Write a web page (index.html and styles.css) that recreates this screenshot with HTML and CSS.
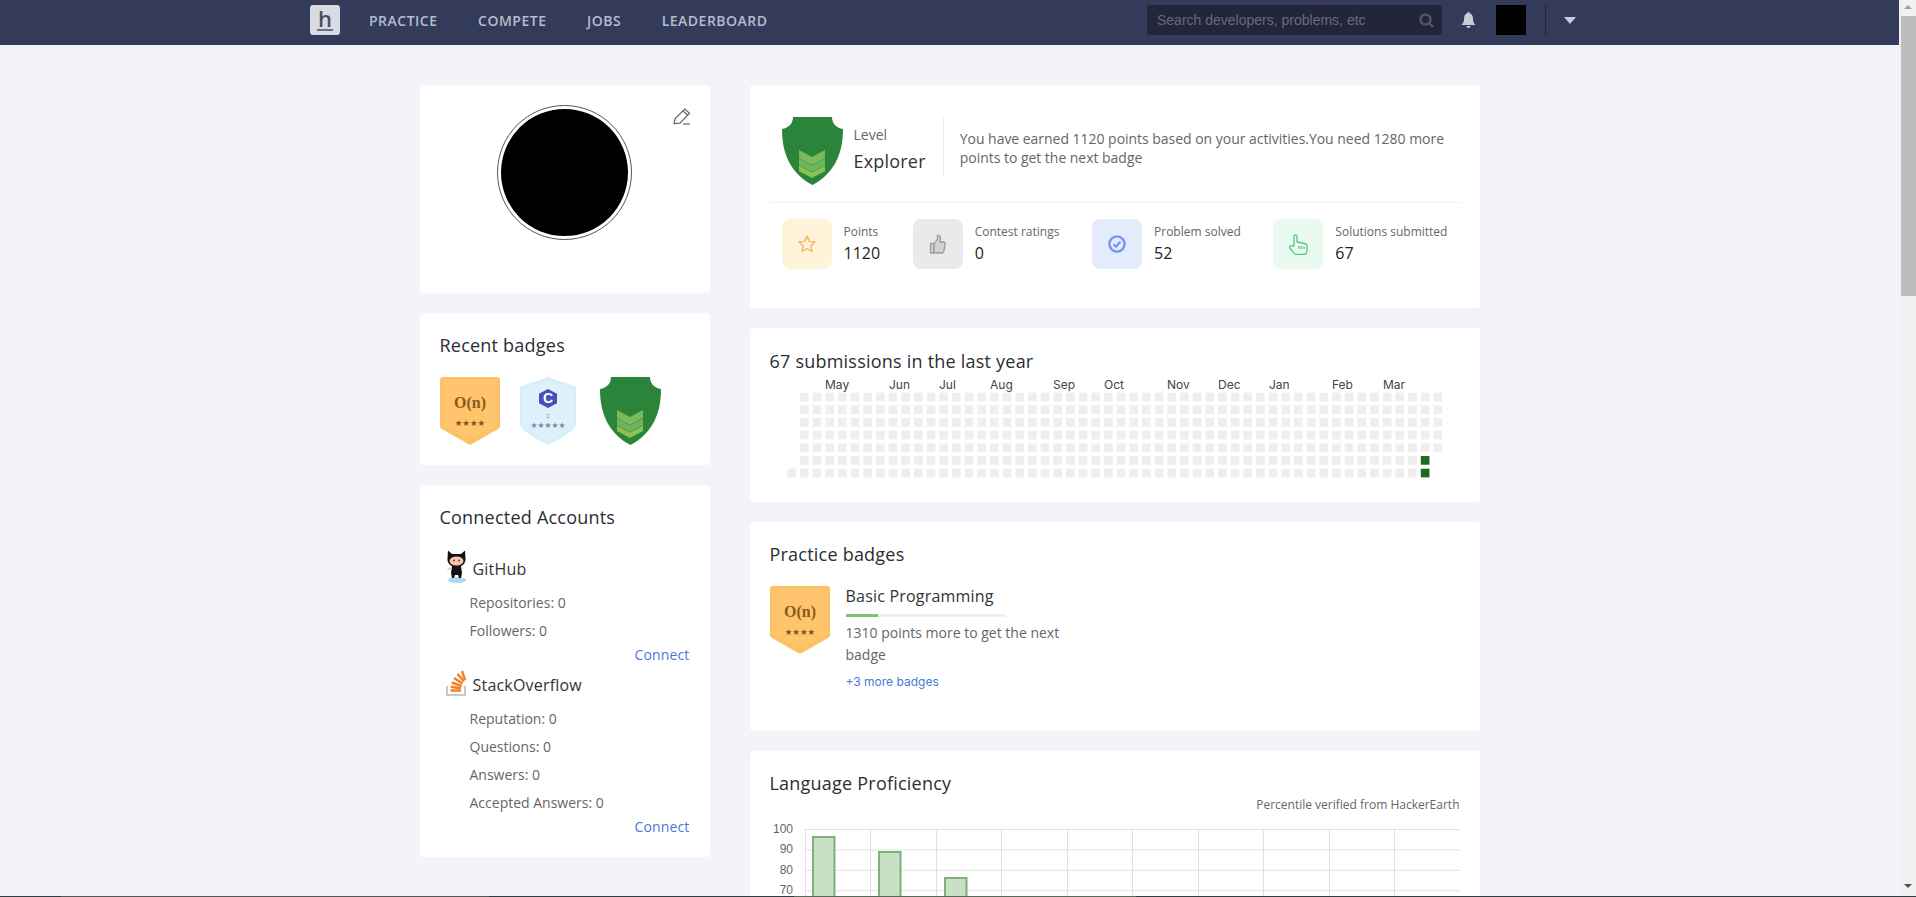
FILE: index.html
```html
<!DOCTYPE html>
<html lang="en">
  <head>
    <meta charset="UTF-8" />
    <title>Profile</title>
    <link rel="stylesheet" href="styles.css">
  </head>
  <body>
    <svg class="defs" width="0" height="0">
      <symbol id="badge-level" viewBox="0 0 61 68">
        <path d="M11 0H50C50 6 54 11 61 12C61 36 53 56 30.500 68C8 56 0 36 0 12C7 11 11 6 11 0z" fill="#2a853a"/>
        <path d="M17 33L30 40 43 33V41L30 48 17 41z" fill="#7cb95c"/>
        <path d="M17 41.500L30 48.500 43 41.500V48L30 55 17 48z" fill="#6fb55f"/>
        <path d="M17 48.500L30 55.500 43 48.500V54L30 61 17 54z" fill="#8cc152"/>
      </symbol>
    </svg>

    <header class="navbar">
      <div class="nav-left">
        <a class="logo">h</a>
        <a class="nav-link">Practice</a>
        <a class="nav-link">Compete</a>
        <a class="nav-link">Jobs</a>
        <a class="nav-link">Leaderboard</a>
      </div>
      <div class="nav-right">
        <div class="search">
          <span>Search developers, problems, etc</span>
          <svg width="15" height="15" viewBox="0 0 15 15" fill="none" stroke="#50556b" stroke-width="2.400"><circle cx="6.500" cy="6.500" r="5"/><path d="M10 10l4 4"/></svg>
        </div>
        <svg class="bell" width="15" height="16" viewBox="0 0 15 16" fill="#c9cdd9"><path d="M7.500 0a1.200 1.200 0 0 1 1.200 1.300C11 2 12 4 12 7c0 3 1 4.500 2.500 6H.5C2 11.500 3 10 3 7c0-3 1-5 3.300-5.700A1.200 1.200 0 0 1 7.500 0z"/><path d="M5.500 14h4a2 2 0 0 1-4 0z"/></svg>
        <div class="nav-avatar"></div>
        <div class="nav-sep"></div>
        <div class="caret"></div>
      </div>
    </header>

    <div class="main">
      <aside class="left-col">
        <section class="card profile-card">
          <div class="avatar"><div class="avatar-img"></div></div>
          <svg class="edit" width="18" height="17" viewBox="0 0 18 17" fill="none" stroke="#6b625c" stroke-width="1.200"><path d="M1 15.500l1.200-5L11.800 1l4.700 4.200-9.500 10z"/><path d="M10 3l4.500 4"/><path d="M10 16h7"/></svg>
        </section>

        <section class="card">
          <h3 class="card-title">Recent badges</h3>
          <div class="badge-row">
            <svg class="badge" width="60" height="68" viewBox="0 0 60 68">
              <path d="M3 0H57a3 3 0 0 1 3 3V49a3 3 0 0 1-2 3L31 67.500a2 2 0 0 1-2 0L2 52a3 3 0 0 1-2-3V3a3 3 0 0 1 3-3z" fill="#fdc163"/>
              <path d="M3 2H57V48.500L30 63 3 48.500z" fill="#fec56c"/>
              <text x="30" y="31" text-anchor="middle" class="badge-on-text">O(n)</text>
              <text x="30" y="49" text-anchor="middle" class="badge-on-stars">★★★★</text>
            </svg>
            <svg class="badge" width="56" height="68" viewBox="0 0 56 68">
              <path d="M28 0L56 10V47C56 53 40 62 28 68C16 62 0 53 0 47V10z" fill="#d6eefa"/>
              <path d="M28 2.500L54 11.500V46C54 51 39 60 28 65.500C17 60 2 51 2 46V11.500z" fill="#dcf1fb"/>
              <path d="M28 12l9 4.750v9.500L28 31l-9-4.750v-9.500z" fill="#4750b8"/>
              <text x="28" y="26" text-anchor="middle" class="badge-c">C</text>
              <text x="28" y="41" text-anchor="middle" class="badge-c-small">C</text>
              <text x="28" y="51" text-anchor="middle" class="badge-c-stars">★★★★★</text>
            </svg>
            <svg class="badge" width="61" height="68"><use href="#badge-level"/></svg>
          </div>
        </section>

        <section class="card">
          <h3 class="card-title">Connected Accounts</h3>
          <div class="account first">
            <div class="account-head">
              <svg class="account-icon" width="21" height="33" viewBox="0 0 21 33">
                <ellipse cx="11" cy="30" rx="9" ry="3" fill="#a9d8ef"/>
                <path d="M2 .5l4 3.500h9l4-3.500.5 8c.5 5-4 8.500-9 8.500s-9.500-3.500-9-8.500z" fill="#111"/>
                <ellipse cx="10.500" cy="11" rx="7" ry="4.500" fill="#f3c7ae"/>
                <circle cx="8" cy="10.500" r="1" fill="#8a3b2a"/><circle cx="13" cy="10.500" r="1" fill="#8a3b2a"/>
                <path d="M6 16h9l1 7-1 5h-2l-1-3h-3l-1 3H6l-1-5z" fill="#111"/>
                <path d="M5 17L1 19l.5 1L6 19z" fill="#f3c7ae"/>
              </svg>
              <span class="account-name">GitHub</span>
            </div>
            <div class="account-row">Repositories: 0</div>
            <div class="account-row">Followers: 0</div>
            <a class="connect">Connect</a>
          </div>
          <div class="account">
            <div class="account-head">
              <svg class="account-icon so-icon" width="21" height="26" viewBox="0 0 21 26">
                <path d="M1 16v9h18v-9" fill="none" stroke="#c9c9c9" stroke-width="2"/>
                <path d="M4.500 20.500h10.500" stroke="#f58025" stroke-width="2.500"/>
                <path d="M4.800 16.800l10.300 1.500" stroke="#f58025" stroke-width="2.500"/>
                <path d="M5.800 12.500l9.800 3.500" stroke="#f58025" stroke-width="2.500"/>
                <path d="M8 8l8.500 5.500" stroke="#f58025" stroke-width="2.500"/>
                <path d="M11.500 4l6.500 7.500" stroke="#f58025" stroke-width="2.500"/>
                <path d="M16 1l3 9" stroke="#f58025" stroke-width="2.500"/>
              </svg>
              <span class="account-name">StackOverflow</span>
            </div>
            <div class="account-row">Reputation: 0</div>
            <div class="account-row">Questions: 0</div>
            <div class="account-row">Answers: 0</div>
            <div class="account-row">Accepted Answers: 0</div>
            <a class="connect">Connect</a>
          </div>
        </section>
      </aside>

      <div class="right-col">
        <section class="card level-card">
          <div class="level-row">
            <svg class="level-badge" width="61" height="68"><use href="#badge-level"/></svg>
            <div class="level-name">
              <div class="level-label">Level</div>
              <div class="level-value">Explorer</div>
            </div>
            <p class="level-desc">You have earned 1120 points based on your activities.You need 1280 more points to get the next badge</p>
          </div>
          <div class="stats">
            <div class="stat">
              <div class="stat-icon stat-yellow">
                <svg width="20" height="20" viewBox="0 0 24 24" fill="none" stroke="#f4b45a" stroke-width="1.700" stroke-linejoin="round"><path d="M12 2.500l2.900 6.300 6.700.8-5 4.600 1.400 6.800L12 17.600 6 21l1.400-6.800-5-4.600 6.700-.8z"/></svg>
              </div>
              <div><div class="stat-label">Points</div><div class="stat-value">1120</div></div>
            </div>
            <div class="stat">
              <div class="stat-icon stat-grey">
                <svg width="20" height="21" viewBox="0 0 20 21" fill="#d2d2d2" stroke="#9b9b9b" stroke-width="1.300" stroke-linejoin="round"><path d="M2.500 9.500h3.500v9.500H2.500z"/><path d="M6 10l3.500-5V1.500c2-.5 3.200 1 3 3L12 8h3.500c1.500 0 2 1.200 1.700 2.500l-1.500 7c-.3 1-1 1.500-2 1.500H8c-1 0-1.500-.5-2-1z"/></svg>
              </div>
              <div><div class="stat-label">Contest ratings</div><div class="stat-value">0</div></div>
            </div>
            <div class="stat">
              <div class="stat-icon stat-blue">
                <svg width="18" height="18" viewBox="0 0 18 18" fill="none" stroke="#7395f0"><circle cx="9" cy="9" r="7.600" stroke-width="2.400"/><path d="M5.500 9.200l2.500 2.500 4.500-5" stroke-width="2.300"/></svg>
              </div>
              <div><div class="stat-label">Problem solved</div><div class="stat-value">52</div></div>
            </div>
            <div class="stat">
              <div class="stat-icon stat-green">
                <svg width="20" height="21" viewBox="0 0 20 21" fill="none" stroke="#5cc785" stroke-width="1.300" stroke-linejoin="round"><path d="M6 12V2.500a1.500 1.500 0 0 1 3 0V8l7.500 1.500c1.500.3 2.500 1 2.500 2.500v4c0 2.500-1.500 4.500-4 4.500H9c-2 0-3-1-4-2.500L2 14c-1-1.500.5-3 2-2z"/><path d="M11 12v3M13.500 12v3M16 12.500V15"/></svg>
              </div>
              <div><div class="stat-label">Solutions submitted</div><div class="stat-value">67</div></div>
            </div>
          </div>
        </section>

        <section class="card heatmap-card">
          <h3 class="card-title">67 submissions in the last year</h3>
          <svg id="heatmap" class="heatmap" width="690" height="105"></svg>
        </section>

        <section class="card practice-card">
          <h3 class="card-title">Practice badges</h3>
          <div class="practice-row">
            <svg class="badge" width="60" height="68" viewBox="0 0 60 68">
              <path d="M3 0H57a3 3 0 0 1 3 3V49a3 3 0 0 1-2 3L31 67.500a2 2 0 0 1-2 0L2 52a3 3 0 0 1-2-3V3a3 3 0 0 1 3-3z" fill="#fdc163"/>
              <path d="M3 2H57V48.500L30 63 3 48.500z" fill="#fec56c"/>
              <text x="30" y="31" text-anchor="middle" class="badge-on-text">O(n)</text>
              <text x="30" y="49" text-anchor="middle" class="badge-on-stars">★★★★</text>
            </svg>
            <div class="practice-info">
              <div class="practice-name">Basic Programming</div>
              <div class="progress"><div class="progress-fill" style="width: 20%"></div></div>
              <p class="practice-text">1310 points more to get the next badge</p>
              <a class="more-link">+3 more badges</a>
            </div>
          </div>
        </section>

        <section class="card language-card">
          <h3 class="card-title">Language Proficiency</h3>
          <div class="verified">Percentile verified from HackerEarth</div>
          <svg id="chart" class="chart" width="690" height="100"></svg>
        </section>
      </div>
    </div>

    <div class="scrollbar">
      <div class="scroll-arrow"></div>
      <div class="scroll-thumb"></div>
      <div class="scroll-arrow-down"></div>
    </div>
    <div class="window-edge"></div>

    <script src="charts.js"></script>
  </body>
</html>
```

FILE: styles.css
```css
* {
  padding: 0px;
  margin: 0px;
  box-sizing: border-box;
}
html,
body {
  height: 100%;
  overflow: hidden;
}
body {
  background: #f3f4f9;
  font-family: "Open Sans", "Liberation Sans", sans-serif;
  color: #666;
  padding-right: 17px;
}
.defs {
  display: block;
  height: 0;
}

/* navbar */
.navbar {
  height: 45px;
  background: #343a59;
  display: flex;
  justify-content: space-between;
  padding: 5px 323px 0px 310px;
}
.nav-left,
.nav-right {
  display: flex;
  height: 30px;
  align-items: center;
}
.logo {
  width: 30px;
  height: 30px;
  background: #d9dbe3;
  border-radius: 3px;
  color: #4a4f66;
  font-size: 22px;
  font-weight: 600;
  line-height: 27px;
  text-align: center;
  position: relative;
  margin-right: 29px;
}
.logo::after {
  content: "";
  position: absolute;
  left: 7px;
  right: 7px;
  bottom: 4px;
  height: 2px;
  background: #6b7088;
}
.nav-link {
  font-size: 14px;
  font-weight: 600;
  color: #b4bccf;
  text-transform: uppercase;
  margin-right: 40.500px;
  letter-spacing: 0.5px;
}
.search {
  width: 295px;
  height: 30px;
  background: #23263b;
  border-radius: 2px;
  display: flex;
  align-items: center;
  justify-content: space-between;
  padding: 0px 8px 0px 10px;
  font-family: "Liberation Sans", sans-serif;
  font-size: 14px;
  color: #666a7c;
}
.bell {
  margin-left: 19px;
}
.nav-avatar {
  width: 30px;
  height: 30px;
  background: #000;
  margin-left: 20px;
}
.nav-sep {
  width: 1px;
  height: 30px;
  background: #23263b;
  margin-left: 19px;
}
.caret {
  width: 0;
  height: 0;
  border-left: 6.500px solid transparent;
  border-right: 6.500px solid transparent;
  border-top: 7px solid #c9cdd9;
  margin-left: 18px;
}

/* page columns */
.main {
  width: 1060px;
  margin: 40px auto 0px;
  display: flex;
  gap: 40px;
  align-items: flex-start;
}
.left-col {
  width: 290px;
  display: flex;
  flex-direction: column;
  gap: 20px;
}
.right-col {
  width: 730px;
  display: flex;
  flex-direction: column;
  gap: 20px;
}
.card {
  background: #fff;
  border-radius: 4px;
  padding: 20px;
}
.card-title {
  font-size: 18px;
  font-weight: 500;
  line-height: 24px;
  letter-spacing: 0.22px;
  color: #2b2e35;
}

/* left column */
.profile-card {
  height: 208px;
  position: relative;
  display: flex;
  justify-content: center;
}
.avatar {
  width: 135px;
  height: 135px;
  border: 1px solid #555;
  border-radius: 50%;
  padding: 3px;
}
.avatar-img {
  width: 100%;
  height: 100%;
  border-radius: 50%;
  background: #000;
}
.edit {
  position: absolute;
  top: 23px;
  right: 19px;
}
.badge-row {
  display: flex;
  gap: 20px;
  margin-top: 20px;
  height: 68px;
}
.badge {
  display: block;
  flex-shrink: 0;
}
.badge-row .badge:last-child {
  margin-left: 4px;
}
.badge-on-text {
  font-family: "Liberation Serif", serif;
  font-weight: 700;
  font-size: 16px;
  fill: #8a5a1c;
}
.badge-on-stars {
  font-family: "DejaVu Sans", sans-serif;
  font-size: 8.500px;
  fill: #7a5220;
}
.badge-c {
  font-family: "Liberation Sans", sans-serif;
  font-weight: 700;
  font-size: 14px;
  fill: #fff;
}
.badge-c-small {
  font-family: "Liberation Sans", sans-serif;
  font-size: 5px;
  fill: #70808c;
}
.badge-c-stars {
  font-family: "DejaVu Sans", sans-serif;
  font-size: 7.800px;
  fill: #70909f;
}
.account.first {
  margin-top: 21px;
}
.account {
  margin-top: 1px;
}
.account-head {
  height: 33px;
  display: flex;
  align-items: flex-start;
  padding-left: 6px;
  margin-bottom: 6px;
}
.account-icon {
  display: block;
  margin-right: 6px;
}
.so-icon {
  margin-top: 4px;
}
.account-name {
  font-size: 16px;
  font-weight: 500;
  line-height: 24px;
  letter-spacing: 0.2px;
  margin-top: 7px;
  color: #333;
}
.account-row {
  font-size: 14px;
  line-height: 28px;
  padding-left: 30px;
}
.connect {
  display: block;
  font-size: 14px;
  font-weight: 500;
  line-height: 20px;
  letter-spacing: 0.15px;
  text-align: right;
  color: #4a78d8;
}

/* level card */
.level-card {
  padding: 32px 20px 39px;
}
.level-row {
  display: flex;
  padding-left: 12px;
  height: 67px;
}
.level-badge {
  display: block;
  flex-shrink: 0;
  margin-right: 11px;
}
.level-name {
  padding-top: 8px;
  padding-right: 17px;
  height: 60px;
  border-right: 1px solid #eee;
}
.level-label {
  font-size: 14px;
  line-height: 20px;
}
.level-value {
  font-size: 18px;
  line-height: 24px;
  margin-top: 4px;
  letter-spacing: 0.2px;
  color: #333;
}
.level-desc {
  font-size: 14px;
  line-height: 19px;
  letter-spacing: -0.03px;
  padding: 12px 0px 0px 16px;
}
.stats {
  display: flex;
  gap: 32.600px;
  border-top: 1px solid #f0f0f0;
  margin-top: 18px;
  padding: 16px 0px 0px 12px;
}
.stat {
  display: flex;
  gap: 12px;
}
.stat-icon {
  width: 50px;
  height: 50px;
  border-radius: 8px;
  display: flex;
  align-items: center;
  justify-content: center;
}
.stat-yellow {
  background: #fff4d9;
}
.stat-grey {
  background: #e9eaec;
}
.stat-blue {
  background: #e4ebfd;
}
.stat-green {
  background: #e9faf0;
}
.stat-label {
  font-size: 12px;
  line-height: 16px;
  margin-top: 5px;
}
.stat-value {
  font-size: 16px;
  line-height: 22px;
  margin-top: 2px;
  color: #222;
}

/* heatmap */
.heatmap-card {
  height: 174px;
  padding-top: 21px;
}
.heatmap {
  display: block;
  margin-top: 3px;
}
.heatmap text {
  font-family: "Inter", "Liberation Sans", sans-serif;
  font-size: 12px;
  fill: #444;
}

/* practice badges */
.practice-card {
  height: 209px;
}
.practice-row {
  display: flex;
  gap: 16px;
  margin-top: 20px;
}
.practice-info {
  width: 220px;
}
.practice-name {
  font-size: 16px;
  font-weight: 500;
  line-height: 20px;
  letter-spacing: 0.2px;
  color: #333;
}
.progress {
  width: 160px;
  height: 3px;
  background: #f0f0f0;
  margin-top: 8px;
}
.progress-fill {
  height: 3px;
  background: #7ec16f;
}
.practice-text {
  font-size: 14px;
  line-height: 22px;
  margin-top: 5px;
}
.more-link {
  display: block;
  font-family: "Inter", "Liberation Sans", sans-serif;
  font-size: 12px;
  line-height: 16px;
  margin-top: 8px;
  color: #4a78d8;
}

/* language chart */
.language-card {
  height: 300px;
}
.verified {
  font-size: 12px;
  line-height: 16px;
  margin-top: 2px;
  text-align: right;
}
.chart {
  display: block;
  margin-top: 7px;
}
.chart text {
  font-family: "Liberation Sans", sans-serif;
  font-size: 12px;
  fill: #666;
}

/* window chrome, over the page */
.scrollbar {
  position: fixed;
  top: 0;
  right: 0;
  width: 17px;
  height: 100%;
  background: #f1f1f1;
}
.scroll-arrow {
  width: 0;
  height: 0;
  margin: 5px 0px 0px 5px;
  border-left: 4px solid transparent;
  border-right: 4px solid transparent;
  border-bottom: 4px solid #9e9e9e;
}
.scroll-arrow-down {
  position: absolute;
  left: 5px;
  bottom: 9px;
  width: 0;
  height: 0;
  border-left: 4px solid transparent;
  border-right: 4px solid transparent;
  border-top: 4px solid #505050;
}
.scroll-thumb {
  position: absolute;
  top: 16px;
  left: 2px;
  width: 15px;
  height: 280px;
  background: #bdbdbd;
}
.window-edge {
  position: fixed;
  left: 0;
  right: 0;
  bottom: 0;
  height: 1px;
  background: linear-gradient(to right, #2c3e44 61px, #555 61px, #555 489px, #2c3e44 489px, #2c3e44 794px, #5a6a5a 794px, #5a6a5a 1136px, #2c3e44 1136px);
}
```

FILE: charts.js
```js
var NS = "http://www.w3.org/2000/svg";

function add(svg, tag, attrs, text) {
  var el = document.createElementNS(NS, tag);
  for (var k in attrs) el.setAttribute(k, attrs[k]);
  if (text) el.textContent = text;
  svg.appendChild(el);
}

// submissions heatmap
var heat = document.getElementById("heatmap");
var months = [["May", 55], ["Jun", 119], ["Jul", 169], ["Aug", 220], ["Sep", 283], ["Oct", 334],
  ["Nov", 397], ["Dec", 448], ["Jan", 499], ["Feb", 562], ["Mar", 613]];
months.forEach(function (m) {
  add(heat, "text", { x: m[1], y: 13 }, m[0]);
});

var pitch = 12.67;
for (var col = 0; col < 52; col++) {
  for (var row = 0; row < 7; row++) {
    if (col == 0 && row < 6) continue; // first week starts on the last day
    if (col == 51 && row > 4) continue; // current week is not over yet
    var active = col == 50 && row > 4;
    add(heat, "rect", {
      x: 17.3 + col * pitch,
      y: 16.7 + row * pitch,
      width: 8.67,
      height: 8.67,
      fill: active ? "#1e6823" : "#eeeeee"
    });
  }
}

// language proficiency chart
var chart = document.getElementById("chart");
var labels = [100, 90, 80, 70];
labels.forEach(function (v, i) {
  var y = 9 + i * 20.4;
  add(chart, "line", { x1: 35, x2: 690, y1: y + 0.5, y2: y + 0.5, stroke: "#e0e0e0" });
  add(chart, "text", { x: 23, y: y + 4, "text-anchor": "end" }, String(v));
});
for (var i = 0; i <= 10; i++) {
  var x = Math.round(34.6 + i * 65.5) + 0.5;
  add(chart, "line", { x1: x, x2: x, y1: 9, y2: 100, stroke: "#e0e0e0" });
}
var bars = [[43, 17], [109, 32], [175, 58]];
bars.forEach(function (b) {
  add(chart, "rect", {
    x: b[0],
    y: b[1],
    width: 21.5,
    height: 100,
    fill: "#c8e0c4",
    stroke: "#7fb07a",
    "stroke-width": 2
  });
});
```
